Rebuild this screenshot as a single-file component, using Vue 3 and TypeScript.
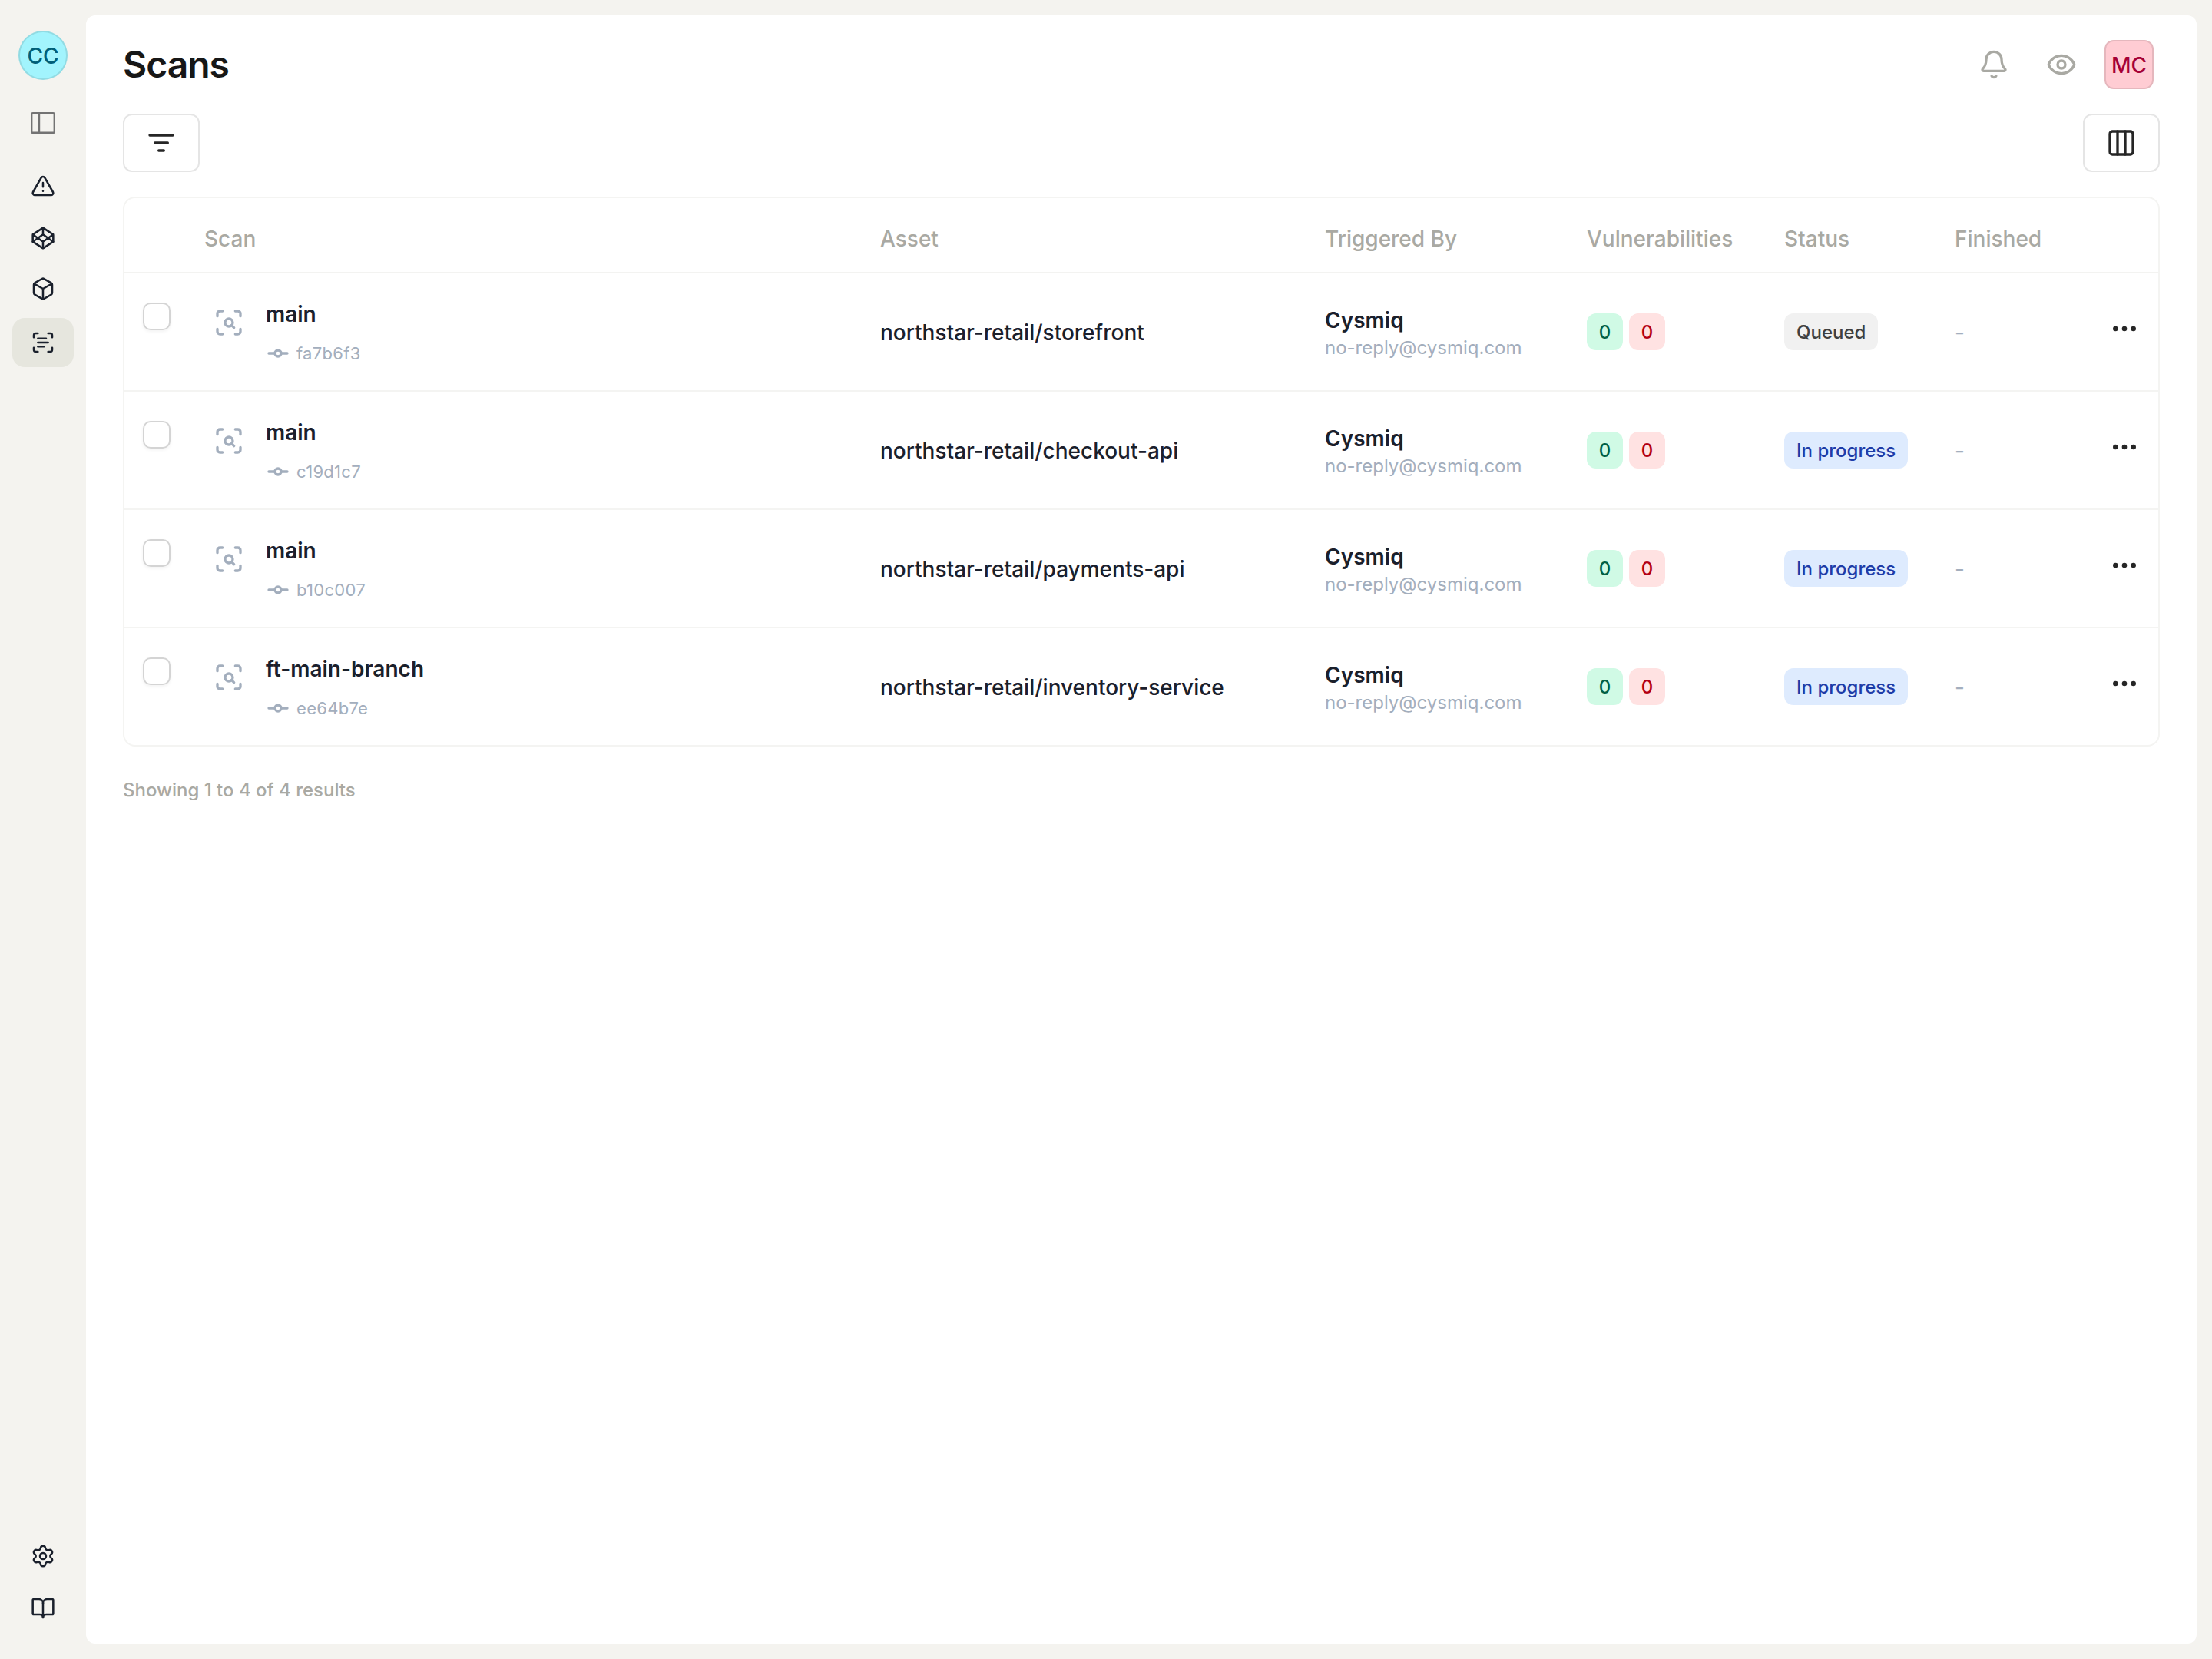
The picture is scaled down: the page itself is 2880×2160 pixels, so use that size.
<script setup lang="ts">
interface Scan {
  branch: string
  commit: string
  asset: string
  status: 'Queued' | 'In progress'
}

const columns: string[] = ['Scan', 'Asset', 'Triggered By', 'Vulnerabilities', 'Status', 'Finished']

const scans: Scan[] = [
  { branch: 'main', commit: 'fa7b6f3', asset: 'northstar-retail/storefront', status: 'Queued' },
  { branch: 'main', commit: 'c19d1c7', asset: 'northstar-retail/checkout-api', status: 'In progress' },
  { branch: 'main', commit: 'b10c007', asset: 'northstar-retail/payments-api', status: 'In progress' },
  { branch: 'ft-main-branch', commit: 'ee64b7e', asset: 'northstar-retail/inventory-service', status: 'In progress' },
]
</script>

<template>
  <div class="app">
    <aside class="sidebar">
      <div class="org">CC</div>
      <svg class="toggle" viewBox="0 0 32 28"><rect x="1.2" y="1.2" width="29.6" height="25.6" rx="1.6" /><path d="M11 1.2v25.6" /></svg>
      <nav class="nav">
        <a class="item"><svg viewBox="0 0 24 24"><path d="m21.73 18-8-14a2 2 0 0 0-3.48 0l-8 14A2 2 0 0 0 4 21h16a2 2 0 0 0 1.73-3" /><path d="M12 9v4M12 17h.01" /></svg></a>
        <a class="item"><svg viewBox="0 0 24 24"><path d="M12 2l10 6.500v7L12 22 2 15.500v-7L12 2zM12 22v-6.500M22 8.500l-10 7-10-7" /><path d="M2 15.500l10-7 10 7M12 2v6.500" /></svg></a>
        <a class="item item-box"><svg viewBox="0 0 24 24"><path d="M21 8a2 2 0 0 0-1-1.730l-7-4a2 2 0 0 0-2 0l-7 4A2 2 0 0 0 3 8v8a2 2 0 0 0 1 1.730l7 4a2 2 0 0 0 2 0l7-4A2 2 0 0 0 21 16Z" /><path d="m3.300 7 8.700 5 8.700-5M12 22V12" /></svg></a>
        <a class="item active"><svg viewBox="0 0 24 24"><path d="M3 7V5a2 2 0 0 1 2-2h2M17 3h2a2 2 0 0 1 2 2v2M21 17v2a2 2 0 0 1-2 2h-2M7 21H5a2 2 0 0 1-2-2v-2M7 8h8M7 12h10M7 16h6" /></svg></a>
      </nav>
      <nav class="nav nav-bottom">
        <a class="item"><svg viewBox="0 0 24 24"><path d="M9.671 4.136a2.340 2.340 0 0 1 4.659 0 2.340 2.340 0 0 0 3.319 1.915 2.340 2.340 0 0 1 2.330 4.033 2.340 2.340 0 0 0 0 3.831 2.340 2.340 0 0 1-2.330 4.033 2.340 2.340 0 0 0-3.319 1.915 2.340 2.340 0 0 1-4.659 0 2.340 2.340 0 0 0-3.320-1.915 2.340 2.340 0 0 1-2.330-4.033 2.340 2.340 0 0 0 0-3.831A2.340 2.340 0 0 1 6.350 6.051a2.340 2.340 0 0 0 3.319-1.915" /><circle cx="12" cy="12" r="3" /></svg></a>
        <a class="item"><svg viewBox="0 0 24 24"><path d="M12 7v14" /><path d="M3 18a1 1 0 0 1-1-1V4a1 1 0 0 1 1-1h5a4 4 0 0 1 4 4 4 4 0 0 1 4-4h5a1 1 0 0 1 1 1v13a1 1 0 0 1-1 1h-6a3 3 0 0 0-3 3 3 3 0 0 0-3-3z" /></svg></a>
      </nav>
    </aside>

    <main class="panel">
      <header class="top">
        <h1>Scans</h1>
        <div class="actions">
          <svg class="icon" viewBox="0 0 24 24"><path d="M10.268 21a2 2 0 0 0 3.464 0" /><path d="M3.262 15.326A1 1 0 0 0 4 17h16a1 1 0 0 0 .740-1.673C19.410 13.956 18 12.499 18 8A6 6 0 0 0 6 8c0 4.499-1.411 5.956-2.738 7.326" /></svg>
          <svg class="icon" viewBox="0 0 24 24"><path d="M2.062 12.348a1 1 0 0 1 0-.696 10.750 10.750 0 0 1 19.876 0 1 1 0 0 1 0 .696 10.750 10.750 0 0 1-19.876 0" /><circle cx="12" cy="12" r="3" /></svg>
          <div class="user">MC</div>
        </div>
      </header>

      <div class="toolbar">
        <button class="btn"><svg class="icon" viewBox="0 0 24 24"><path d="M3 6h18M7 12h10M10 18h4" /></svg></button>
        <button class="btn"><svg class="icon" viewBox="0 0 24 24"><rect x="3" y="3" width="18" height="18" rx="2" /><path d="M9 3v18M15 3v18" /></svg></button>
      </div>

      <section class="table">
        <div class="row head">
          <span></span>
          <span v-for="c in columns" :key="c">{{ c }}</span>
          <span></span>
        </div>
        <div v-for="s in scans" :key="s.commit" class="row body">
          <div class="check"></div>
          <div class="scan">
            <svg class="icon scan-icon" viewBox="0 0 24 24"><path d="M3 7V5a2 2 0 0 1 2-2h2M17 3h2a2 2 0 0 1 2 2v2M21 17v2a2 2 0 0 1-2 2h-2M7 21H5a2 2 0 0 1-2-2v-2" /><circle cx="12" cy="12" r="3" /><path d="m16 16-1.900-1.900" /></svg>
            <div>
              <div class="branch">{{ s.branch }}</div>
              <div class="commit">
                <svg viewBox="0 0 24 24"><circle cx="12" cy="12" r="3" /><path d="M3 12h6M15 12h6" /></svg>
                <span>{{ s.commit }}</span>
              </div>
            </div>
          </div>
          <div class="asset">{{ s.asset }}</div>
          <div class="by">
            <div class="name">Cysmiq</div>
            <div class="mail">no-reply@cysmiq.com</div>
          </div>
          <div class="vulns">
            <span class="badge green">0</span>
            <span class="badge red">0</span>
          </div>
          <div><span class="badge" :class="s.status === 'Queued' ? 'gray' : 'blue'">{{ s.status }}</span></div>
          <div class="finished">-</div>
          <svg class="icon more" viewBox="0 0 24 24"><circle cx="5" cy="12" r="1" /><circle cx="12" cy="12" r="1" /><circle cx="19" cy="12" r="1" /></svg>
        </div>
      </section>

      <p class="summary">Showing 1 to 4 of 4 results</p>
    </main>
  </div>
</template>

<style>
body {
  margin: 0;
  background: #f4f3ef;
}
</style>

<style scoped>
.app {
  box-sizing: border-box;
  display: flex;
  width: 2880px;
  height: 2160px;
  padding: 20px 20px 20px 0;
  background: #f4f3ef;
  font-family: Inter, "Liberation Sans", sans-serif;
  font-size: 28px;
  line-height: 40px;
  color: #1a202c;
}
svg {
  display: block;
  flex: none;
  fill: none;
  stroke: currentColor;
  stroke-width: 2;
  stroke-linecap: round;
  stroke-linejoin: round;
}
.icon {
  width: 40px;
  height: 40px;
}
.sidebar {
  display: flex;
  flex-direction: column;
  align-items: center;
  width: 112px;
  padding-top: 20px;
  box-sizing: border-box;
}
.org,
.user {
  box-sizing: border-box;
  width: 64px;
  height: 64px;
  display: flex;
  align-items: center;
  justify-content: center;
  padding-top: 1px;
  font-size: 28px;
  border: 2px solid rgba(0, 0, 0, 0.1);
}
.org {
  border-radius: 50%;
  background: #a2f4fd;
  color: #005f78;
  font-weight: 500;
}
.toggle {
  width: 32px;
  height: 28px;
  margin-top: 42px;
  stroke-width: 2.4;
  color: #737373;
}
.nav {
  display: flex;
  flex-direction: column;
  gap: 4px;
  margin-top: 36px;
}
.nav-bottom {
  margin-top: auto;
  margin-bottom: 14px;
}
.item {
  display: flex;
  align-items: center;
  justify-content: center;
  width: 80px;
  height: 64px;
  border-radius: 16px;
}
.item svg {
  width: 32px;
  height: 32px;
  stroke-width: 1.9;
}
.item-box svg {
  margin-bottom: 4px;
}
.active {
  background: #e6e6de;
}
.panel {
  flex: 1;
  box-sizing: border-box;
  padding: 32px 48px;
  background: #fff;
  border-radius: 12px;
}
.top {
  display: flex;
  align-items: center;
  justify-content: space-between;
  height: 64px;
}
h1 {
  margin: 0;
  font-size: 48px;
  line-height: 64px;
  font-weight: 600;
  letter-spacing: -1px;
  color: #171717;
}
.actions {
  display: flex;
  align-items: center;
  gap: 48px;
  padding-right: 8px;
  color: #a9a9a3;
}
.user {
  margin-left: -12px;
  border-radius: 12px;
  background: #ffccd3;
  color: #a50036;
  font-weight: 500;
}
.toolbar {
  display: flex;
  justify-content: space-between;
  margin-top: 32px;
}
.btn {
  box-sizing: border-box;
  display: flex;
  align-items: center;
  justify-content: center;
  width: 100px;
  height: 76px;
  padding: 0;
  border: 2px solid #e5e5e5;
  border-radius: 12px;
  background: #fff;
  color: #262626;
}
.table {
  margin-top: 32px;
  border: 2px solid #f4f4f2;
  border-radius: 16px;
}
.row {
  display: grid;
  grid-template-columns: 104px 880px 579px 341px 257px 222px 201px 64px;
}
.head {
  height: 96px;
  align-items: center;
  border-bottom: 2px solid #f3f3f1;
  font-weight: 500;
  color: #a9a9a3;
}
.head span {
  padding-top: 10px;
}
.body {
  height: 152px;
  align-items: center;
}
.body + .body {
  border-top: 2px solid #f4f4f2;
}
.check {
  box-sizing: border-box;
  align-self: start;
  width: 36px;
  height: 36px;
  margin: 38px 0 0 24px;
  border: 2px solid #d4d4d4;
  border-radius: 10px;
  box-shadow: 0 2px 4px rgba(0, 0, 0, 0.05);
}
.scan {
  display: flex;
  align-self: start;
  padding: 33px 0 0 12px;
}
.scan-icon {
  margin: 11px 28px 0 0;
  color: #a3aebd;
}
.branch,
.name {
  font-weight: 600;
}
.commit {
  display: flex;
  align-items: center;
  gap: 8px;
  margin-top: 15px;
  line-height: 32px;
  font-size: 22px;
  font-weight: 400;
  letter-spacing: 0.3px;
  color: #a3aebd;
}
.commit svg {
  width: 32px;
  height: 32px;
  stroke-width: 2.5;
}
.asset,
.finished {
  padding-top: 2px;
}
.asset {
  font-weight: 500;
}
.by {
  padding-top: 6px;
}
.name {
  line-height: 36px;
}
.mail {
  line-height: 36px;
  font-size: 24px;
  color: #a3aebd;
}
.vulns {
  display: flex;
  gap: 8px;
}
.badge {
  display: inline-block;
  padding: 1px 16px 0;
  border-radius: 12px;
  font-size: 24px;
  line-height: 47px;
  font-weight: 500;
  vertical-align: top;
}
.vulns .badge {
  box-sizing: border-box;
  width: 47px;
  padding-inline: 0;
  text-align: center;
}
.green {
  background: #d0fae5;
  color: #006045;
}
.red {
  background: #ffe2e2;
  color: #b40012;
}
.gray {
  background: #f1f1f1;
  color: #404040;
}
.blue {
  background: #deebfe;
  color: #1e3ca8;
}
.finished {
  color: #a3aebd;
}
.more {
  margin-top: -8px;
  color: #262626;
}
.summary {
  margin: 41px 0 0;
  font-size: 24px;
  line-height: 32px;
  font-weight: 500;
  color: #a9a9a3;
}
</style>
